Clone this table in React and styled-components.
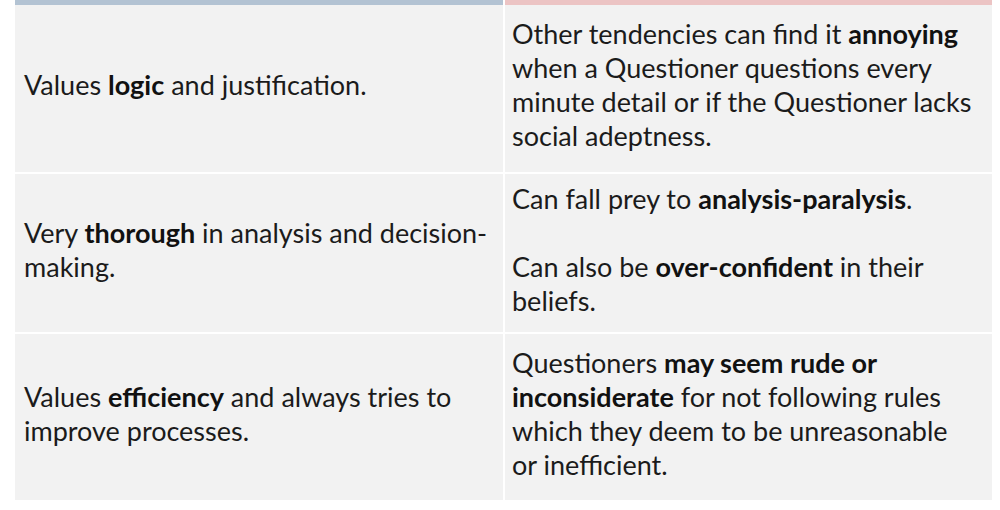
import React from "react";
import styled, { createGlobalStyle } from "styled-components";

const Global = createGlobalStyle`
  html, body { margin: 0; padding: 0; background: #ffffff; }
  body { font-family: Lato, "Open Sans", sans-serif; }
`;

const Page = styled.div`
  width: 1000px;
  height: 510px;
  padding: 0 8px 0 15px;
  box-sizing: border-box;
  background: #ffffff;
`;

const Table = styled.div`
  width: 977px;
  display: grid;
  grid-template-columns: 488px 487px;
  grid-template-rows: 3px 167px 158px 166px;
  column-gap: 2px;
  row-gap: 2px;
`;

const TopRule = styled.div`
  background: ${(p) => p.$color};
  margin-bottom: -2px;
`;

const Cell = styled.div`
  background: #f2f2f2;
  display: flex;
  flex-direction: column;
  justify-content: center;
  padding: 0 0 7px ${(p) => (p.$right ? "7px" : "9px")};
  color: #1b1b1b;
  font-size: 27px;
  line-height: 34px;
  white-space: nowrap;
`;

const Line = styled.div`
  height: 34px;
`;

const B = styled.b`
  font-weight: 700;
  color: #111;
`;

const rows = [
  {
    left: [<>Values <B>logic</B> and justification.</>],
    right: [
      <>Other tendencies can find it <B>annoying</B></>,
      <>when a Questioner questions every</>,
      <>minute detail or if the Questioner lacks</>,
      <>social adeptness.</>,
    ],
  },
  {
    left: [<>Very <B>thorough</B> in analysis and decision-</>, <>making.</>],
    right: [
      <>Can fall prey to <B>analysis-paralysis</B>.</>,
      null,
      <>Can also be <B>over-confident</B> in their</>,
      <>beliefs.</>,
    ],
  },
  {
    left: [<>Values <B>efficiency</B> and always tries to</>, <>improve processes.</>],
    right: [
      <>Questioners <B>may seem rude or</B></>,
      <><B>inconsiderate</B> for not following rules</>,
      <>which they deem to be unreasonable</>,
      <>or inefficient.</>,
    ],
  },
];

export default function App() {
  return (
    <>
      <Global />
      <Page>
        <Table>
          <TopRule $color="#b3c3d3" />
          <TopRule $color="#ecc4c4" />
          {rows.map((r, i) => (
            <React.Fragment key={i}>
              <Cell>
                {r.left.map((l, j) => (
                  <Line key={j}>{l}</Line>
                ))}
              </Cell>
              <Cell $right>
                {r.right.map((l, j) => (
                  <Line key={j}>{l}</Line>
                ))}
              </Cell>
            </React.Fragment>
          ))}
        </Table>
      </Page>
    </>
  );
}
